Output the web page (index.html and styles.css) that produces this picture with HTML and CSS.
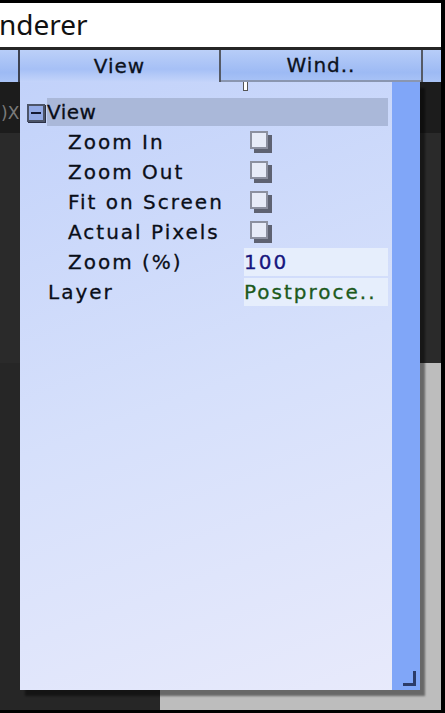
FILE: index.html
```html
<!DOCTYPE html>
<html>
<head>
<meta charset="utf-8">
<link rel="stylesheet" href="styles.css">
</head>
<body>
<div class="screen">
  <div class="titlebar"><span class="title">nderer</span></div>
  <div class="menubar">
    <div class="stub stub-left"></div>
    <div class="tab tab-active">View</div>
    <div class="tab">Wind..</div>
    <div class="stub stub-right"></div>
  </div>
  <div class="main">
    <div class="cell top-left"><span class="ghost">)X</span></div>
    <div class="cell top-right"></div>
    <div class="cell mid"></div>
    <div class="cell mid"></div>
    <div class="cell low-left"></div>
    <div class="cell low-right"></div>
  </div>

  <div class="dropdown">
    <div class="content">
      <div class="row header">
        <span class="collapse"><span class="minus"></span></span>
        <span class="header-label">View</span>
      </div>
      <div class="row"><span class="label sub">Zoom In</span><span class="value"><span class="check"></span></span></div>
      <div class="row"><span class="label sub">Zoom Out</span><span class="value"><span class="check"></span></span></div>
      <div class="row"><span class="label sub">Fit on Screen</span><span class="value"><span class="check"></span></span></div>
      <div class="row"><span class="label sub">Actual Pixels</span><span class="value"><span class="check"></span></span></div>
      <div class="row"><span class="label sub">Zoom (%)</span><span class="value field num">100</span></div>
      <div class="row"><span class="label">Layer</span><span class="value field str">Postproce..</span></div>
    </div>
    <div class="scrollbar"><span class="grip"></span></div>
    <span class="tick"></span>
  </div>
</div>
</body>
</html>
```
FILE: styles.css
```css
html, body {
  margin: 0;
  padding: 0;
}
body {
  width: 445px;
  height: 713px;
  background: #000;
  overflow: hidden;
  font-family: "DejaVu Sans", Verdana, sans-serif;
}
.screen {
  position: relative;
  margin: 3px 4px 0 0;
  height: 707px;
  display: flex;
  flex-direction: column;
}
.titlebar {
  height: 44px;
  background: #fff;
  border-bottom: 3px solid #262626;
  display: flex;
  align-items: center;
  overflow: hidden;
}
.title {
  font-family: "Noto Sans", "Open Sans", sans-serif;
  font-size: 28px;
  color: #111;
  margin-left: -1px;
  margin-top: -2px;
}
.menubar {
  height: 32px;
  display: flex;
  background: linear-gradient(#b7cdf8, #9dbaf4 70%, #a9c3f6);
}
.stub-left {
  width: 18px;
  border-right: 2px solid #3c4252;
}
.stub-right {
  flex: 1;
  border-left: 2px solid #555a66;
}
.tab {
  width: 200px;
  text-align: center;
  font-size: 20px;
  letter-spacing: 1px;
  line-height: 32px;
  color: #0c1220;
  -webkit-text-stroke: 0.3px #0c1220;
}
.tab-active {
  width: 199px;
  border-right: 2px solid #555a66;
  background: linear-gradient(#bcd0f8, #a6c0f6 60%, #c4d4fa);
}
.tab:not(.tab-active) {
  border-bottom: 2px solid #8a96b0;
  line-height: 30px;
}
.main {
  flex: 1;
  display: grid;
  grid-template-columns: 160px 1fr;
  grid-template-rows: 51px 230px 1fr;
  background: #262626;
}
.top-left, .top-right {
  background: #1c1c1c;
}
.mid {
  background: #2a2a2a;
}
.low-left {
  background: #262626;
}
.low-right {
  background: #bdbdbd;
}
.ghost {
  display: inline-block;
  margin: 21px 0 0 1px;
  font-size: 17px;
  color: #7a7a7a;
}
.dropdown {
  position: absolute;
  left: 20px;
  top: 79px;
  width: 400px;
  height: 608px;
  display: flex;
  background: linear-gradient(160deg, #c2d2fa 0%, #d6e0fb 50%, #e8eafb 100%);
  box-shadow: 5px 6px 2px rgba(0, 0, 0, 0.45);
}
.content {
  flex: 1;
  padding: 16px 4px 0 7px;
  display: flex;
  flex-direction: column;
  gap: 2px;
}
.scrollbar {
  width: 28px;
  background: #80a6f8;
  position: relative;
}
.grip {
  position: absolute;
  right: 4px;
  bottom: 4px;
  width: 13px;
  height: 15px;
  border-right: 3px solid #2c3b68;
  border-bottom: 3px solid #2c3b68;
  box-sizing: border-box;
}
.tick {
  position: absolute;
  left: 223px;
  top: 0;
  width: 3px;
  height: 8px;
  background: #fff;
  border: 1px solid #555;
  border-top: none;
}
.row {
  height: 28px;
  display: flex;
  align-items: center;
  font-size: 20px;
  letter-spacing: 2px;
  color: #0a0e18;
  -webkit-text-stroke: 0.3px #0a0e18;
}
.header {
  align-items: stretch;
  letter-spacing: 0.5px;
}
.collapse {
  width: 14px;
  height: 14px;
  margin-top: 6px;
  border: 2px solid #4c5468;
  background: #93aae6;
  box-shadow: 1px 1px 0 #2a3045;
  display: flex;
  align-items: center;
  justify-content: center;
}
.minus {
  width: 10px;
  height: 2px;
  background: #141a35;
}
.header-label {
  flex: 1;
  margin-left: 2px;
  background: #aab8d9;
  line-height: 28px;
}
.label {
  width: 217px;
  padding-left: 21px;
  box-sizing: border-box;
}
.label.sub {
  padding-left: 41px;
}
.value {
  flex: 1;
  height: 28px;
  display: flex;
  align-items: center;
}
.field {
  background: #e6eefc;
}
.num {
  color: #16167e;
  -webkit-text-stroke: 0.3px #16167e;
}
.str {
  color: #1c5a1c;
  -webkit-text-stroke: 0.3px #1c5a1c;
}
.check {
  width: 14px;
  height: 14px;
  margin-left: 6px;
  margin-top: -4px;
  border: 2px solid #8c90a0;
  background: #e7ebf8;
  box-shadow: 4px 4px 0 #5e6272;
}
```
